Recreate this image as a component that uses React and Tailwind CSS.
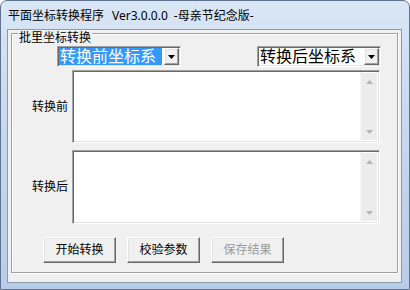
const sunken =
  'border border-t-[#a0a0a0] border-l-[#a0a0a0] border-b-white border-r-white shadow-[inset_1px_1px_0_#696969,inset_-1px_-1px_0_#e3e3e3]';
const raised =
  'border border-t-white border-l-white border-b-[#696969] border-r-[#696969] shadow-[inset_-1px_-1px_0_#a0a0a0,inset_1px_1px_0_#e3e3e3]';

const font = { fontFamily: '"Noto Sans", "Noto Sans CJK SC", sans-serif' };

const Arrow = ({ up, color = '#000' }) => (
  <svg width="7" height="4" viewBox="0 0 7 4">
    <polygon points={up ? '0,4 7,4 3.5,0' : '0,0 7,0 3.5,4'} fill={color} />
  </svg>
);

const Combo = ({ label, selected }) => (
  <div className={`flex h-[21px] w-[124px] bg-white ${sunken}`}>
    <div className="flex flex-1 p-[1px]">
      <span
        className={`flex-1 pl-[1px] text-[16px] leading-[17px] ${
          selected ? 'bg-[#3399ff] text-white' : 'text-black'
        }`}
      >
        {label}
      </span>
    </div>
    <div
      className={`m-[1px] flex w-[15px] items-center justify-center bg-[#f0f0f0] ${raised}`}
    >
      <Arrow />
    </div>
  </div>
);

const Memo = () => (
  <div className={`flex h-full w-[308px] bg-white p-[2px] ${sunken}`}>
    <div className="flex-1" />
    <div className="flex w-[17px] flex-col bg-[#ececec] border-l border-[#f7f7f7]">
      <div className="flex h-[17px] items-center justify-center">
        <Arrow up color="#b4b4b4" />
      </div>
      <div className="flex-1" />
      <div className="flex h-[17px] items-center justify-center">
        <Arrow color="#b4b4b4" />
      </div>
    </div>
  </div>
);

const Button = ({ children, disabled }) => (
  <button
    className={`h-[26px] w-[73px] bg-[#f0f0f0] text-[12px] leading-none ${raised} ${
      disabled ? 'text-[#9a9a9a]' : 'text-black'
    }`}
  >
    {children}
  </button>
);

export default function App() {
  return (
    <div
      className="flex h-[290px] w-[410px] flex-col overflow-hidden rounded-t-[7px] border border-[#5f7390] bg-gradient-to-b from-[#d9e6f5] via-[#c4d7ee] to-[#b8cde8]"
      style={font}
    >
      <div className="flex h-[28px] items-center pl-[7px] pt-[2px] text-[12px] leading-none text-black whitespace-nowrap">
        <span>平面坐标转换程序</span>
        <span className="ml-[8px]">Ver3.0.0.0</span>
        <span className="ml-[6px]">-母亲节纪念版-</span>
      </div>

      <div className="ml-[6px] mr-[7px] h-[254px] border border-[#8a9bb2] bg-[#f0f0f0]">
        <div className="relative ml-[3px] mt-[3px] flex h-[240px] w-[387px] flex-col border border-[#a0a0a0] shadow-[inset_1px_1px_0_#fff,1px_1px_0_#fff]">
          <span className="absolute left-[6px] -top-[3px] bg-[#f0f0f0] px-[1px] text-[12px] leading-[14px] text-black">
            批里坐标转换
          </span>

          <div className="mt-[12px] flex justify-between pl-[45px] pr-[16px]">
            <Combo label="转换前坐标系" selected />
            <Combo label="转换后坐标系" />
          </div>

          <div className="mt-[3px] flex h-[73px] items-center">
            <span className="w-[60px] pr-[4px] text-right text-[12px] leading-none text-black">
              转换前
            </span>
            <Memo />
          </div>

          <div className="mt-[7px] flex h-[74px] items-center">
            <span className="w-[60px] pr-[4px] text-right text-[12px] leading-none text-black">
              转换后
            </span>
            <Memo />
          </div>

          <div className="mt-[13px] flex gap-[11px] pl-[31px]">
            <Button>开始转换</Button>
            <Button>校验参数</Button>
            <Button disabled>保存结果</Button>
          </div>
        </div>
      </div>
    </div>
  );
}
